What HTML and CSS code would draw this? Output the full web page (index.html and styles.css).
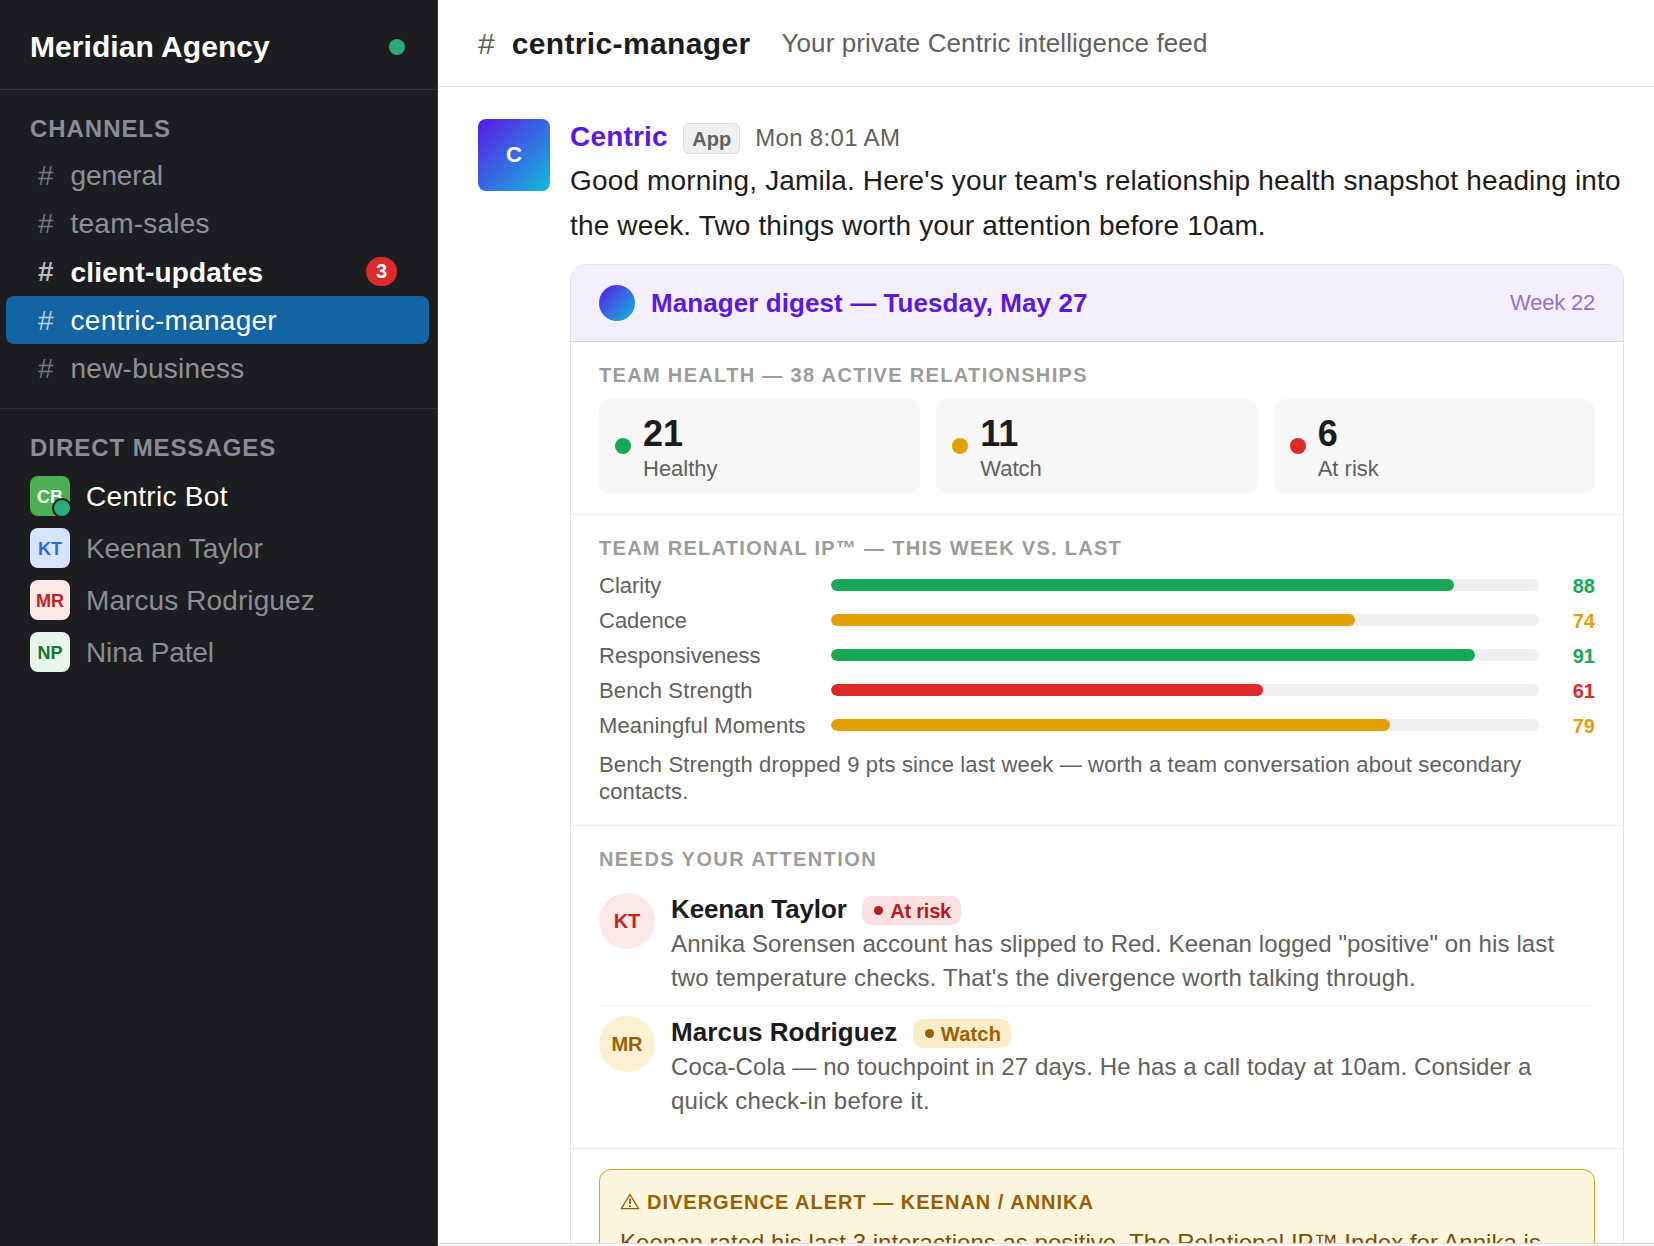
FILE: index.html
```html
<!DOCTYPE html>
<html lang="en">
<head>
<meta charset="utf-8">
<title>centric-manager | Meridian Agency</title>
<link rel="stylesheet" href="styles.css">
</head>
<body>
<div class="app">
  <aside class="sidebar">
    <div class="workspace">
      <span class="workspace-name">Meridian Agency</span>
      <span class="presence"></span>
    </div>
    <nav class="group">
      <h2 class="group-title">CHANNELS</h2>
      <div class="channel"><span class="hash">#</span><span class="channel-name snug">general</span></div>
      <div class="channel"><span class="hash">#</span><span class="channel-name">team-sales</span></div>
      <div class="channel unread"><span class="hash">#</span><span class="channel-name">client-updates</span><span class="count">3</span></div>
      <div class="channel active"><span class="hash">#</span><span class="channel-name">centric-manager</span></div>
      <div class="channel"><span class="hash">#</span><span class="channel-name">new-business</span></div>
    </nav>
    <nav class="group dms">
      <h2 class="group-title">DIRECT MESSAGES</h2>
      <div class="dm online"><span class="tile tile-cb">CB<i class="status"></i></span><span class="dm-name wide">Centric Bot</span></div>
      <div class="dm"><span class="tile tile-kt">KT</span><span class="dm-name tight">Keenan Taylor</span></div>
      <div class="dm"><span class="tile tile-mr">MR</span><span class="dm-name">Marcus Rodriguez</span></div>
      <div class="dm"><span class="tile tile-np">NP</span><span class="dm-name tight">Nina Patel</span></div>
    </nav>
  </aside>

  <main class="main">
    <header class="topbar">
      <span class="topbar-hash">#</span>
      <h1 class="topbar-title">centric-manager</h1>
      <span class="topbar-sub">Your private Centric intelligence feed</span>
    </header>

    <div class="feed">
      <div class="message">
        <div class="bot-avatar">C</div>
        <div class="body">
          <div class="meta">
            <span class="author">Centric</span>
            <span class="app-tag">App</span>
            <span class="time">Mon 8:01 AM</span>
          </div>
          <p class="intro">Good morning, Jamila. Here's your team's relationship health snapshot heading into<br>the week. Two things worth your attention before 10am.</p>

          <article class="card">
            <div class="card-head">
              <span class="orb"></span>
              <span class="card-title">Manager digest — Tuesday, May 27</span>
              <span class="week">Week 22</span>
            </div>

            <section class="section">
              <h3 class="label">TEAM HEALTH — 38 ACTIVE RELATIONSHIPS</h3>
              <div class="stats">
                <div class="stat"><span class="dot green"></span><div class="stat-text"><div class="stat-num">21</div><div class="stat-name">Healthy</div></div></div>
                <div class="stat"><span class="dot amber"></span><div class="stat-text"><div class="stat-num">11</div><div class="stat-name">Watch</div></div></div>
                <div class="stat"><span class="dot red"></span><div class="stat-text"><div class="stat-num">6</div><div class="stat-name">At risk</div></div></div>
              </div>
            </section>

            <section class="section">
              <h3 class="label label-snug">TEAM RELATIONAL IP™ — THIS WEEK VS. LAST</h3>
              <div class="bars">
                <div class="bar-row"><span class="bar-name">Clarity</span><span class="track"><span class="fill green" style="width:88%"></span></span><span class="score green-text">88</span></div>
                <div class="bar-row"><span class="bar-name">Cadence</span><span class="track"><span class="fill amber" style="width:74%"></span></span><span class="score amber-text">74</span></div>
                <div class="bar-row"><span class="bar-name">Responsiveness</span><span class="track"><span class="fill green" style="width:91%"></span></span><span class="score green-text">91</span></div>
                <div class="bar-row"><span class="bar-name loose">Bench Strength</span><span class="track"><span class="fill red" style="width:61%"></span></span><span class="score red-text">61</span></div>
                <div class="bar-row"><span class="bar-name loose">Meaningful Moments</span><span class="track"><span class="fill amber" style="width:79%"></span></span><span class="score amber-text">79</span></div>
              </div>
              <p class="note">Bench Strength dropped 9 pts since last week — worth a team conversation about secondary<br>contacts.</p>
            </section>

            <section class="section">
              <h3 class="label label-wide">NEEDS YOUR ATTENTION</h3>
              <div class="person">
                <span class="initials risk">KT</span>
                <div class="person-body">
                  <div class="person-head"><span class="person-name tight">Keenan Taylor</span><span class="pill risk-pill"><i class="bullet"></i><span class="pill-risk-text">At risk</span></span></div>
                  <p class="desc">Annika Sorensen account has slipped to Red. Keenan logged "positive" on his last<br><span class="desc-wide">two temperature checks. That's the divergence worth talking through.</span></p>
                </div>
              </div>
              <div class="person">
                <span class="initials watch">MR</span>
                <div class="person-body">
                  <div class="person-head"><span class="person-name">Marcus Rodriguez</span><span class="pill watch-pill"><i class="bullet"></i><span class="pill-watch-text">Watch</span></span></div>
                  <p class="desc">Coca-Cola — no touchpoint in 27 days. He has a call today at 10am. Consider a<br><span class="desc-wider">quick check-in before it.</span></p>
                </div>
              </div>
            </section>

            <section class="section last">
              <div class="alert">
                <div class="alert-title">
                  <svg class="warn" width="20" height="17" viewBox="0 0 20 17" fill="none" stroke="currentColor" stroke-width="1.3"><path d="M10 1.5 18.6 15.6H1.4Z"/><path d="M10 5.6V11" stroke-width="1.8"/><path d="M10 12.2v1.7" stroke-width="1.8"/></svg>
                  <span>DIVERGENCE ALERT — KEENAN / ANNIKA</span>
                </div>
                <p class="alert-text">Keenan rated his last 3 interactions as positive. The Relational IP™ Index for Annika is</p>
              </div>
            </section>
          </article>
        </div>
      </div>
    </div>
    <footer class="composer"></footer>
  </main>
</div>
</body>
</html>
```
FILE: styles.css
```css
* { box-sizing: border-box; }

body {
  margin: 0;
  font-family: "Liberation Sans", Arial, sans-serif;
  color: #1d1c1d;
  background: #fff;
}

h1, h2, h3, p { margin: 0; }

.app {
  display: flex;
  height: 1246px;
  overflow: hidden;
}

/* Sidebar */
.sidebar {
  flex: 0 0 438px;
  background: #1b1d21;
  border-right: 1px solid #35373b;
}

.workspace {
  display: flex;
  align-items: center;
  justify-content: space-between;
  height: 90px;
  padding: 30px 32px 26px 30px;
  border-bottom: 1px solid #333539;
}

.workspace-name {
  font-size: 30px;
  line-height: 33px;
  font-weight: 700;
  letter-spacing: 0.06px;
  color: #fff;
}

.presence {
  width: 16px;
  height: 16px;
  border-radius: 50%;
  background: #2bac76;
}

.group { padding: 25px 0 15.5px; }

.group-title {
  margin-bottom: 9px;
  padding: 0 30px;
  font-size: 24px;
  line-height: 27px;
  letter-spacing: 0.95px;
  color: #8b8d92;
}

.channel {
  display: flex;
  align-items: center;
  gap: 17px;
  height: 48.3px;
  margin: 0 8px 0 6px;
  padding: 0 32px;
  border-radius: 8px;
  font-size: 28px;
  line-height: 31px;
  color: #8f9196;
}

.hash { color: #74767b; }
.channel-name { flex: 1; letter-spacing: 0.22px; }
.channel-name.snug { letter-spacing: -0.16px; }

.channel.unread { font-weight: 700; color: #fff; }
.unread .channel-name { padding-top: 1px; letter-spacing: 0.2px; }
.unread .hash { color: #bcbdbf; }

.channel.active { background: #1264a3; color: #fff; }
.active .channel-name { letter-spacing: 0.27px; }
.active .hash { color: #b4cfe4; }

.count {
  width: 31px;
  height: 29px;
  border-radius: 15px;
  background: #dc2b2b;
  font-size: 20px;
  line-height: 29px;
  text-align: center;
}

.dms { border-top: 1px solid #2e3034; }

.dm {
  display: flex;
  align-items: center;
  gap: 16px;
  height: 52px;
  padding: 0 30px;
  font-size: 28px;
  line-height: 31px;
  color: #8b8d92;
}

.dm.online { color: #fff; }
.dm-name { padding-top: 2px; letter-spacing: 0.1px; }
.dm-name.wide { letter-spacing: 0.3px; }
.loose { letter-spacing: 0.14px; }
.tight, .dm-name.tight { letter-spacing: -0.14px; }

.tile {
  position: relative;
  width: 40px;
  height: 40px;
  border-radius: 8px;
  font-size: 18px;
  line-height: 42px;
  font-weight: 700;
  text-align: center;
}

.tile-cb { background: #4caf50; color: #fff; }
.tile-kt { background: #d6e4ff; color: #1f6fe0; }
.tile-mr { background: #fce8e6; color: #c5221f; }
.tile-np { background: #e6f4ea; color: #137333; }

.status {
  position: absolute;
  right: -2px;
  bottom: -2px;
  width: 20px;
  height: 20px;
  border: 2px solid #1b1d21;
  border-radius: 50%;
  background: #2bac76;
}

/* Main column */
.main {
  flex: 1;
  display: flex;
  flex-direction: column;
  min-width: 0;
}

.topbar {
  display: flex;
  align-items: center;
  flex: 0 0 87px;
  padding: 1px 40px 0;
  border-bottom: 1px solid #e3e3e3;
}

.topbar-hash {
  margin-right: 17px;
  font-size: 30px;
  line-height: 33px;
  color: #616061;
}

.topbar-title {
  margin-right: 31px;
  font-size: 30px;
  line-height: 33px;
  letter-spacing: 0.36px;
}

.topbar-sub {
  padding-bottom: 2px;
  font-size: 26px;
  line-height: 30px;
  letter-spacing: 0.09px;
  color: #616061;
}

.feed {
  flex: 1;
  min-height: 0;
  overflow: hidden;
  padding: 32px 30px 0 40px;
}

.composer {
  flex: 0 0 3px;
  border-top: 1px solid #dedede;
}

.message { display: flex; gap: 20px; }

.bot-avatar {
  flex: 0 0 72px;
  height: 72px;
  border-radius: 8px;
  background: linear-gradient(135deg, #5b16e8, #12bcdc);
  color: #fff;
  font-size: 22px;
  line-height: 72px;
  font-weight: 700;
  text-align: center;
}

.body { flex: 1; min-width: 0; }

.meta {
  display: flex;
  align-items: baseline;
  height: 40.3px;
  padding-top: 2px;
}

.author {
  font-size: 28px;
  line-height: 31px;
  font-weight: 700;
  letter-spacing: 0.18px;
  color: #5b18e2;
}

.app-tag {
  margin: 0 15px 0 15.5px;
  padding: 4px 8px 3px;
  border: 1px solid #dcdcdc;
  border-radius: 6px;
  background: #efefef;
  font-size: 20px;
  line-height: 22px;
  font-weight: 700;
  color: #616061;
}

.time {
  font-size: 24px;
  line-height: 27px;
  letter-spacing: 0.34px;
  color: #616061;
}

.intro {
  font-size: 28px;
  line-height: 44.8px;
  letter-spacing: 0.155px;
  white-space: nowrap;
}

/* Digest card */
.card {
  margin-top: 15px;
  border: 1px solid #e4e4e8;
  border-radius: 16px;
  overflow: hidden;
}

.card-head {
  display: flex;
  align-items: center;
  gap: 16px;
  height: 77px;
  padding: 0 28px;
  background: #f4effe;
  border-bottom: 1px solid #d9d2ec;
}

.orb {
  width: 36px;
  height: 36px;
  border-radius: 50%;
  background: linear-gradient(135deg, #5b16e8, #12bcdc);
}

.card-title {
  flex: 1;
  font-size: 26px;
  line-height: 30px;
  font-weight: 700;
  letter-spacing: 0.08px;
  color: #5b18e2;
}

.week {
  font-size: 22px;
  line-height: 25px;
  letter-spacing: -0.2px;
  color: #9673cb;
}

.section {
  padding: 22px 28px 20px;
  border-bottom: 1px solid #ececec;
}

.label {
  margin-bottom: 13px;
  font-size: 20px;
  line-height: 22px;
  letter-spacing: 1.33px;
  color: #9c9c9c;
}

.label-snug { letter-spacing: 1.29px; }
.label-wide { letter-spacing: 1.42px; }

.stats {
  display: grid;
  grid-template-columns: repeat(3, 1fr);
  gap: 16px;
}

.stat {
  display: flex;
  align-items: center;
  gap: 12px;
  height: 95px;
  padding: 0 16px;
  border-radius: 12px;
  background: #f7f7f7;
}

.dot { width: 16px; height: 16px; border-radius: 50%; }
.stat-text { padding-top: 4px; }

.stat-num {
  margin-bottom: 3.5px;
  font-size: 36px;
  line-height: 36px;
  font-weight: 700;
}

.stat-name { font-size: 22px; line-height: 25px; color: #616061; }

.green { background: #16a757; }
.amber { background: #e4a000; }
.red { background: #dc2a2a; }
.green-text { color: #16a757; }
.amber-text { color: #e0a010; }
.red-text { color: #dc2a2a; }

.bars { display: grid; gap: 8px; }

.bar-row {
  display: grid;
  grid-template-columns: 216px 1fr 40px;
  gap: 16px;
  align-items: center;
  height: 27px;
}

.bar-name { font-size: 22px; line-height: 25px; color: #616061; white-space: nowrap; }

.track {
  height: 12px;
  border-radius: 6px;
  background: #efefef;
  overflow: hidden;
}

.fill { display: block; height: 100%; border-radius: 6px; }

.score {
  padding-top: 2px;
  font-size: 20px;
  line-height: 22px;
  font-weight: 700;
  text-align: right;
}

.note {
  margin-top: 12px;
  font-size: 22px;
  line-height: 27px;
  letter-spacing: 0.155px;
  color: #616061;
}

.person {
  display: flex;
  gap: 16px;
  padding: 10px 0;
}

.person + .person { border-top: 1px solid #f2f2f2; }

.initials {
  flex: 0 0 56px;
  height: 56px;
  border-radius: 50%;
  font-size: 20px;
  line-height: 57px;
  font-weight: 700;
  text-align: center;
}

.risk { background: #fce8e6; color: #c5221f; }
.watch { background: #fdefd3; color: #9a6000; }

.person-head { display: flex; align-items: flex-start; height: 34px; padding-top: 1px; }

.person-name {
  margin-right: 15.5px;
  font-size: 26px;
  line-height: 30px;
  font-weight: 700;
  letter-spacing: 0.06px;
}

.person-name.tight { letter-spacing: -0.12px; }

.pill {
  display: flex;
  align-items: center;
  gap: 7px;
  margin-top: 2px;
  padding: 4px 10px 3px 12px;
  border-radius: 10px;
  font-size: 20px;
  line-height: 22px;
  font-weight: 700;
}

.bullet { width: 9px; height: 9px; border-radius: 50%; background: currentColor; }
.risk-pill { background: #fbe1e2; color: #b71c1c; }
.watch-pill { background: #fdecc8; color: #9a6000; }
.pill-risk-text { letter-spacing: -0.2px; }
.pill-watch-text { letter-spacing: 0.2px; }

.desc {
  font-size: 24px;
  line-height: 34px;
  letter-spacing: 0.12px;
  color: #616061;
}

.desc-wide { letter-spacing: 0.18px; }
.desc-wider { letter-spacing: 0.27px; }

.section.last { padding-top: 20px; border-bottom: 0; }

.alert {
  height: 180px;
  padding: 21px 20px;
  border: 1px solid #d9a520;
  border-radius: 12px;
  background: #fdf6df;
}

.alert-title {
  display: flex;
  align-items: center;
  gap: 7px;
  font-size: 20px;
  line-height: 22px;
  font-weight: 700;
  letter-spacing: 1px;
  color: #965f00;
}

.alert-text {
  margin-top: 13px;
  font-size: 24px;
  line-height: 34px;
  letter-spacing: 0.025px;
  color: #7a4f00;
  white-space: nowrap;
}
```
